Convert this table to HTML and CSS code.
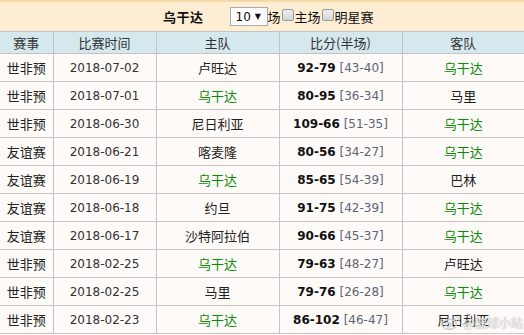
FILE: index.html
```html
<!DOCTYPE html>
<html>
<head>
<meta charset="utf-8">
<link rel="stylesheet" href="styles.css">
</head>
<body>
<div class="page">
  <div class="topbar">
    <span class="team">乌干达</span>
    <span class="select">10 <span class="arrow">▼</span></span>
    <span class="lbl">场</span><span class="cb"></span><span class="lbl">主场</span><span class="cb"></span><span class="lbl">明星赛</span>
  </div>
  <table class="grid">
    <colgroup>
      <col class="c1"><col class="c2"><col class="c3"><col class="c4"><col class="c5">
    </colgroup>
    <thead>
      <tr><th>赛事</th><th>比赛时间</th><th>主队</th><th>比分(半场)</th><th>客队</th></tr>
    </thead>
    <tbody>
      <tr><td>世非预</td><td class="date">2018-07-02</td><td>卢旺达</td><td class="score"><b>92-79</b> <span class="half">[43-40]</span></td><td class="win">乌干达</td></tr>
      <tr><td>世非预</td><td class="date">2018-07-01</td><td class="win">乌干达</td><td class="score"><b>80-95</b> <span class="half">[36-34]</span></td><td>马里</td></tr>
      <tr><td>世非预</td><td class="date">2018-06-30</td><td>尼日利亚</td><td class="score"><b>109-66</b> <span class="half">[51-35]</span></td><td class="win">乌干达</td></tr>
      <tr><td>友谊赛</td><td class="date">2018-06-21</td><td>喀麦隆</td><td class="score"><b>80-56</b> <span class="half">[34-27]</span></td><td class="win">乌干达</td></tr>
      <tr><td>友谊赛</td><td class="date">2018-06-19</td><td class="win">乌干达</td><td class="score"><b>85-65</b> <span class="half">[54-39]</span></td><td>巴林</td></tr>
      <tr><td>友谊赛</td><td class="date">2018-06-18</td><td>约旦</td><td class="score"><b>91-75</b> <span class="half">[42-39]</span></td><td class="win">乌干达</td></tr>
      <tr><td>友谊赛</td><td class="date">2018-06-17</td><td>沙特阿拉伯</td><td class="score"><b>90-66</b> <span class="half">[45-37]</span></td><td class="win">乌干达</td></tr>
      <tr><td>世非预</td><td class="date">2018-02-25</td><td class="win">乌干达</td><td class="score"><b>79-63</b> <span class="half">[48-27]</span></td><td>卢旺达</td></tr>
      <tr><td>世非预</td><td class="date">2018-02-25</td><td>马里</td><td class="score"><b>79-76</b> <span class="half">[26-28]</span></td><td class="win">乌干达</td></tr>
      <tr><td>世非预</td><td class="date">2018-02-23</td><td class="win">乌干达</td><td class="score"><b>86-102</b> <span class="half">[46-47]</span></td><td>尼日利亚</td></tr>
    </tbody>
  </table>
  <div class="watermark">
    <svg width="20" height="17" viewBox="0 0 22 18"><ellipse cx="9" cy="11" rx="8" ry="5.5" fill="none" stroke="#cfcfcf" stroke-width="1.6"/><circle cx="8" cy="11.5" r="2.6" fill="none" stroke="#cfcfcf" stroke-width="1.4"/><path d="M14 2 a6 6 0 0 1 6 6" fill="none" stroke="#cfcfcf" stroke-width="1.4"/><path d="M14 5 a3 3 0 0 1 3 3" fill="none" stroke="#cfcfcf" stroke-width="1.3"/></svg>
    <span>@篮球小站</span>
  </div>
</div>
</body>
</html>
```
FILE: styles.css
```css
html, body {
  margin: 0;
  padding: 0;
  background: #fdfaf7;
}
.page {
  position: relative;
  width: 524px;
  height: 335px;
  overflow: hidden;
  font-family: "Noto Sans CJK SC", "DejaVu Sans", sans-serif;
  color: #222;
}
.topbar {
  height: 29px;
  border-top: 2px solid #f3d9a6;
  background: #fdeed3;
  display: flex;
  align-items: center;
  padding-left: 163px;
  font-size: 13px;
  color: #111;
}
.team {
  font-weight: bold;
  margin-right: 26px;
  letter-spacing: 0.5px;
}
.select {
  display: inline-flex;
  align-items: center;
  box-sizing: border-box;
  width: 38px;
  height: 19px;
  background: #fff;
  border: 1px solid #a9a9a9;
  font-family: "DejaVu Sans", sans-serif;
  font-size: 12px;
  padding-left: 5px;
  color: #111;
}
.arrow {
  font-size: 8px;
  margin-left: 4px;
}
.lbl {
  line-height: 1;
}
.cb {
  display: inline-block;
  width: 10px;
  height: 10px;
  border: 1px solid #9a9a9a;
  border-radius: 2px;
  background: linear-gradient(#eee, #d6d6d6);
  margin: 0 1px 0 1px;
  position: relative;
  top: -2px;
}
.grid {
  width: 524px;
  border-collapse: collapse;
  table-layout: fixed;
  font-size: 13px;
}
.c1 { width: 53px; }
.c2 { width: 103px; }
.c3 { width: 123px; }
.c4 { width: 123px; }
.c5 { width: 122px; }
.grid th, .grid td {
  border: 1px solid #c4c4c4;
  text-align: center;
  padding: 0;
  white-space: nowrap;
}
.grid th:first-child, .grid td:first-child { border-left: none; }
.grid th:last-child, .grid td:last-child { border-right: none; }
.grid th {
  height: 21px;
  background: #d5e8ee;
  font-weight: normal;
  color: #333;
}
.grid td {
  height: 27px;
  background: #fdfaf7;
  color: #222;
}
.grid td.date {
  font-family: "DejaVu Sans", sans-serif;
  font-size: 12px;
  color: #333;
}
.grid td.win {
  color: #0a8a0a;
}
.score {
  font-family: "DejaVu Sans", sans-serif;
  font-size: 12px;
}
.score b {
  color: #111;
}
.half {
  color: #5d6478;
}
.watermark {
  position: absolute;
  left: 441px;
  top: 314px;
  display: flex;
  align-items: center;
  gap: 2px;
  font-size: 12px;
  color: rgba(240, 240, 240, 0.8);
  text-shadow: 0 0 1px rgba(110,110,110,0.5);
  font-weight: bold;
}
```
